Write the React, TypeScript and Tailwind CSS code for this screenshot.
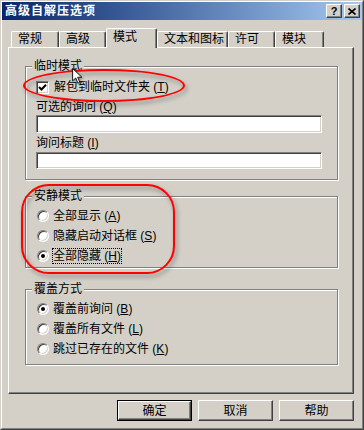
import { ReactNode } from "react";

const raised =
  "border border-t-white border-l-white border-r-[#404040] border-b-[#404040] shadow-[inset_-1px_-1px_0_#808080]";
const sunken =
  "border border-t-[#808080] border-l-[#808080] border-r-white border-b-white shadow-[inset_1px_1px_0_#404040,inset_-1px_-1px_0_#d4d0c8]";

function Mn({ text, k }: { text: string; k: string }) {
  return (
    <span className="whitespace-pre">
      {text} (<span className="underline underline-offset-[1px]">{k}</span>)
    </span>
  );
}

function Tab({ label, width, active }: { label: string; width: string; active?: boolean }) {
  if (active) {
    return (
      <div
        className={`relative z-10 -mb-px h-[20px] ${width} bg-[#d4d0c8] border-t border-l border-t-white border-l-white border-r border-r-[#404040] shadow-[inset_-1px_0_0_#808080] rounded-t-[2px] pl-[6px] pt-[1px] leading-[14px]`}
      >
        {label}
      </div>
    );
  }
  return (
    <div
      className={`h-[16px] ${width} border-t border-l border-t-white border-l-white border-r border-r-[#404040] shadow-[inset_-1px_0_0_#808080] rounded-t-[2px] pl-[6px] leading-[14px]`}
    >
      {label}
    </div>
  );
}

function Group({ title, className, children }: { title: string; className: string; children: ReactNode }) {
  return (
    <div className={`relative w-[313px] border border-[#808080] shadow-[inset_1px_1px_0_#fff,1px_1px_0_#fff] ${className}`}>
      <span className="absolute left-[6px] top-[-8px] bg-[#d4d0c8] px-[2px] leading-[14px]">{title}</span>
      {children}
    </div>
  );
}

function Radio({ checked, focus, children, h }: { checked?: boolean; focus?: boolean; children: ReactNode; h: string }) {
  return (
    <div className={`flex items-center gap-[3px] ${h}`}>
      <div className="relative flex items-center justify-center w-[12px] h-[12px] rounded-full bg-white border border-t-[#808080] border-l-[#808080] border-r-white border-b-white shadow-[inset_1px_1px_0_#404040,inset_-1px_-1px_0_#d4d0c8]">
        {checked && <div className="w-[4px] h-[4px] rounded-full bg-black" />}
      </div>
      <span
        className={`border leading-[14px] ${focus ? "border-dotted border-black" : "border-transparent"}`}
      >
        {children}
      </span>
    </div>
  );
}

function Button({ label, def }: { label: string; def?: boolean }) {
  if (def) {
    return (
      <div className="w-[75px] h-[21px] border border-black">
        <div className={`w-full h-full flex items-center justify-center ${raised}`}>{label}</div>
      </div>
    );
  }
  return <div className={`w-[75px] h-[21px] flex items-center justify-center ${raised}`}>{label}</div>;
}

export default function App() {
  return (
    <div className="relative w-[364px] h-[430px] bg-[#d4d0c8] text-black text-[12px] font-['Liberation_Sans','Noto_Sans_CJK_SC',sans-serif] border border-t-[#d4d0c8] border-l-[#d4d0c8] border-r-[#404040] border-b-[#404040]">
      <div className="w-full h-full border border-t-white border-l-white border-r-[#808080] border-b-[#808080]">
        {/* title bar */}
        <div className="h-[18px] flex items-center justify-between bg-linear-to-r from-[#0a246a] to-[#a6caf0] pl-[3px] pr-[2px]">
          <span className="text-white font-bold tracking-[1px] leading-[14px]">高级自解压选项</span>
          <div className="flex gap-[2px]">
            <div className={`w-[16px] h-[14px] bg-[#d4d0c8] flex items-center justify-center font-bold text-[11px] leading-[12px] ${raised}`}>
              ?
            </div>
            <div className={`w-[16px] h-[14px] bg-[#d4d0c8] flex items-center justify-center ${raised}`}>
              <svg width="8" height="7" viewBox="0 0 8 7">
                <path d="M0.5 0.5 L7.5 6.5 M7.5 0.5 L0.5 6.5" stroke="#000" strokeWidth="1.6" />
              </svg>
            </div>
          </div>
        </div>

        {/* tabs */}
        <div className="mt-[8px] h-[19px] flex items-end pl-[9px]">
          <Tab label="常规" width="w-[48px]" />
          <Tab label="高级" width="w-[47px]" />
          <Tab label="模式" width="w-[51px]" active />
          <Tab label="文本和图标" width="w-[71px]" />
          <Tab label="许可" width="w-[47px]" />
          <Tab label="模块" width="w-[49px]" />
        </div>

        {/* panel */}
        <div className="ml-[6px] w-[346px] h-[347px] border border-t-white border-l-white border-r-[#404040] border-b-[#404040] shadow-[inset_-1px_-1px_0_#808080] pl-[16px] pt-[18px]">
          <Group title="临时模式" className="h-[114px] pl-[10px] pt-[12px]">
            <div className="h-[16px] flex items-center gap-[5px]">
              <div className={`w-[13px] h-[13px] bg-white flex items-center justify-center ${sunken}`}>
                <svg width="9" height="9" viewBox="0 0 9 9">
                  <path d="M1 4 L3.5 6.5 L8 1.8" fill="none" stroke="#000" strokeWidth="2" />
                </svg>
              </div>
              <span className="leading-[14px]">
                <Mn text="解包到临时文件夹" k="T" />
              </span>
            </div>
            <div className="mt-[4px] h-[16px] flex items-center leading-[14px]">
              <Mn text="可选的询问" k="Q" />
            </div>
            <div className={`w-[286px] h-[18px] bg-white ${sunken}`} />
            <div className="mt-[2px] h-[16px] flex items-center leading-[14px]">
              <Mn text="询问标题" k="I" />
            </div>
            <div className={`mt-[1px] w-[286px] h-[17px] bg-white ${sunken}`} />
          </Group>

          <Group title="安静模式" className="mt-[16px] h-[72px] pl-[11px] pt-[9px] flex flex-col gap-[1px]">
            <Radio h="h-[19px]">
              <Mn text="全部显示" k="A" />
            </Radio>
            <Radio h="h-[19px]">
              <Mn text="隐藏启动对话框" k="S" />
            </Radio>
            <Radio h="h-[19px]" checked focus>
              <Mn text="全部隐藏" k="H" />
            </Radio>
          </Group>

          <Group title="覆盖方式" className="mt-[21px] h-[76px] pl-[11px] pt-[9px] flex flex-col">
            <Radio h="h-[20px]" checked>
              <Mn text="覆盖前询问" k="B" />
            </Radio>
            <Radio h="h-[20px]">
              <Mn text="覆盖所有文件" k="L" />
            </Radio>
            <Radio h="h-[20px]">
              <Mn text="跳过已存在的文件" k="K" />
            </Radio>
          </Group>
        </div>

        {/* buttons */}
        <div className="mt-[6px] ml-[6px] w-[346px] flex justify-end gap-[6px]">
          <Button label="确定" def />
          <Button label="取消" />
          <Button label="帮助" />
        </div>
      </div>

      {/* annotations */}
      <div className="absolute left-[22px] top-[68px] w-[162px] h-[33px] rounded-[50%] border-2 border-[#ff0000] [filter:drop-shadow(2px_3px_2px_rgba(0,0,0,0.4))]" />
      <div className="absolute left-[20px] top-[183px] w-[154px] h-[90px] rounded-[28px] border-2 border-[#ff0000] [filter:drop-shadow(2px_3px_2px_rgba(0,0,0,0.4))]" />

      {/* mouse pointer */}
      <svg
        className="absolute left-[71px] top-[67px] [filter:drop-shadow(1px_1px_1px_rgba(0,0,0,0.4))]"
        width="11"
        height="16"
        viewBox="0 0 12 18"
      >
        <path d="M0.5 0.5 V14.5 L4 11.2 L6.5 17 L8.6 16 L6.2 10.4 H10.8 Z" fill="#fff" stroke="#000" strokeWidth="1" />
      </svg>
    </div>
  );
}
